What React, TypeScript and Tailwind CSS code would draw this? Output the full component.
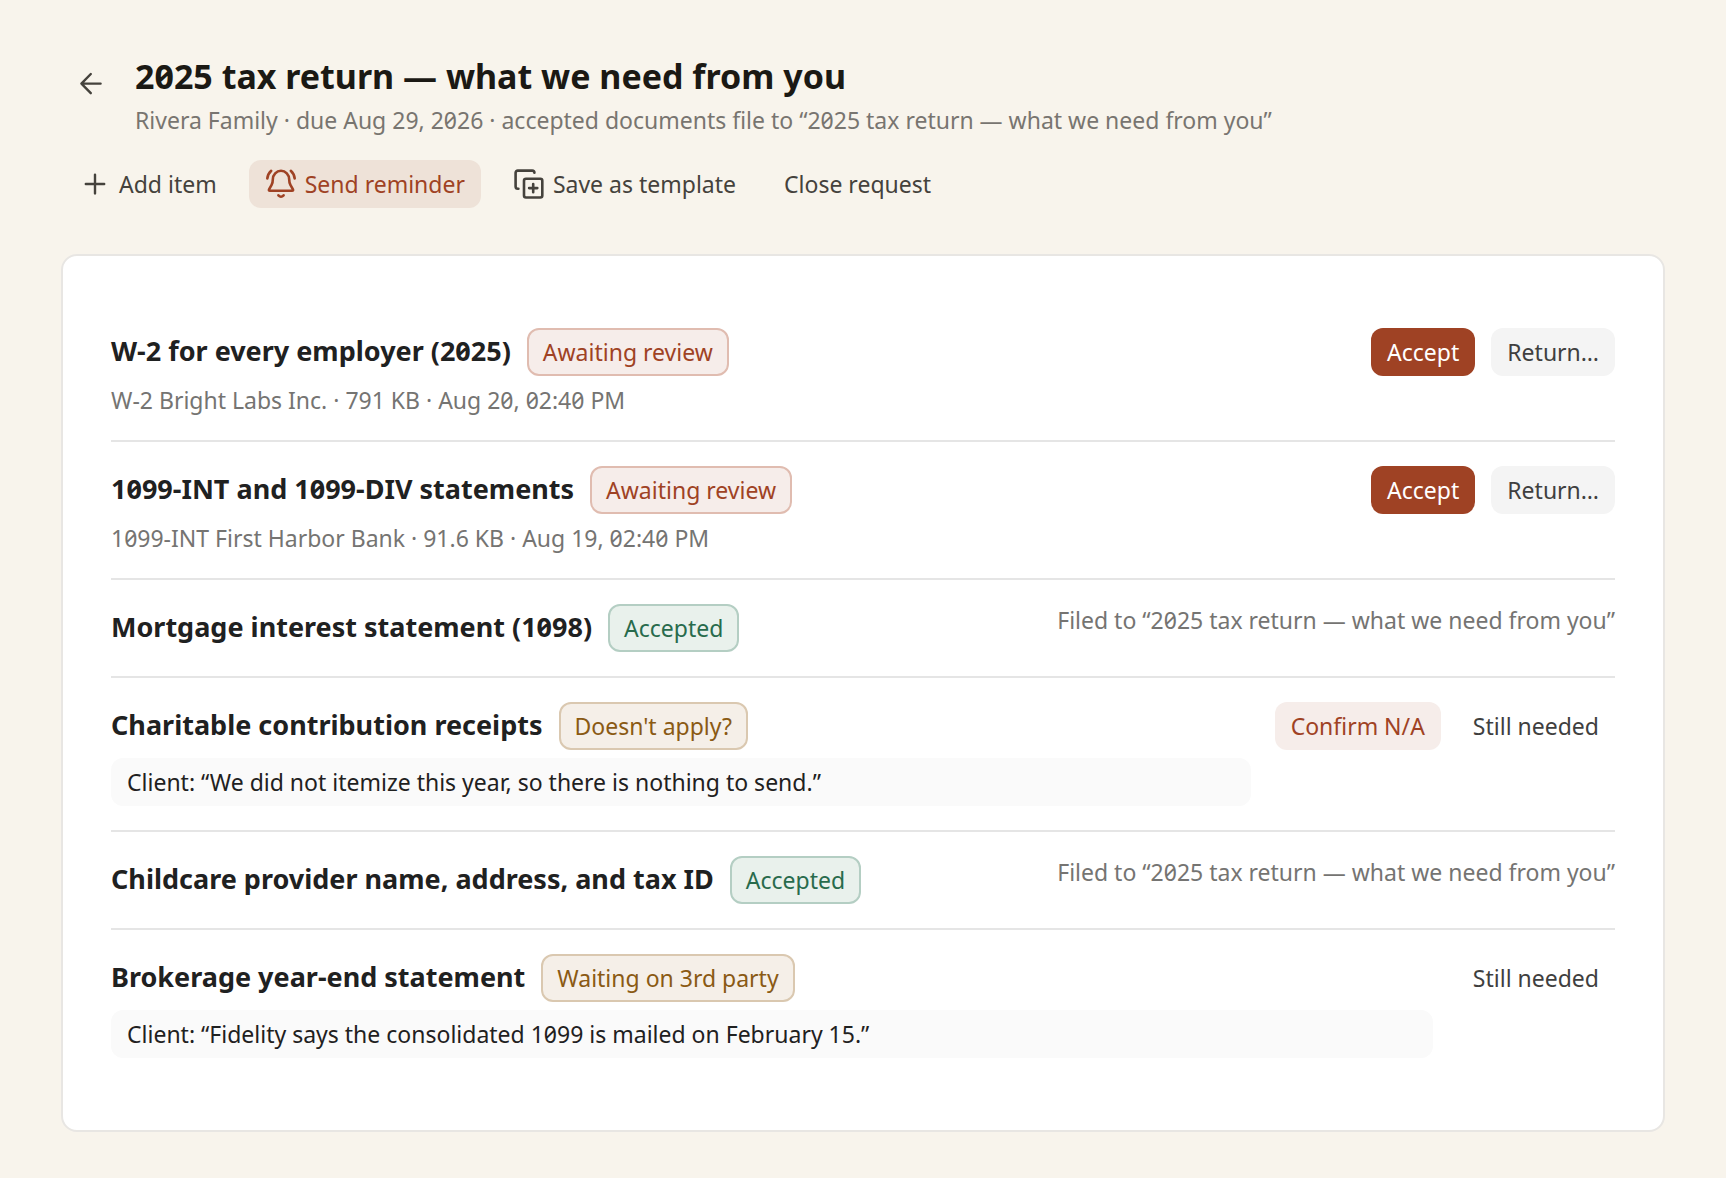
import React from 'react';

type Tone = 'rust' | 'green' | 'amber';

interface RequestItem {
  title: string;
  status: string;
  tone: Tone;
  detail?: string;
  note?: string;
  filed?: string;
  actions?: { label: string; kind: keyof typeof buttonKinds }[];
}

const buttonKinds = {
  primary: 'bg-[#9f4224] text-white',
  neutral: 'bg-[#f4f4f4] text-[#3f3f3f]',
  soft: 'bg-[#f6edea] text-[#9f4224]',
  plain: 'text-[#3f3f3f]'
};

const badgeTones: Record<Tone, string> = {
  rust: 'border-[#e0bcb0] bg-[#f6edea] text-[#9f4224]',
  green: 'border-[#b4cec3] bg-[#e9f1ec] text-[#286b4c]',
  amber: 'border-[#dac8b0] bg-[#f5efe8] text-[#8a5a14]'
};

const folder = '“2025 tax return — what we need from you”';

const items: RequestItem[] = [
  {
    title: 'W-2 for every employer (2025)',
    status: 'Awaiting review',
    tone: 'rust',
    detail: 'W-2 Bright Labs Inc. · 791 KB · Aug 20, 02:40 PM',
    actions: [
      { label: 'Accept', kind: 'primary' },
      { label: 'Return…', kind: 'neutral' }
    ]
  },
  {
    title: '1099-INT and 1099-DIV statements',
    status: 'Awaiting review',
    tone: 'rust',
    detail: '1099-INT First Harbor Bank · 91.6 KB · Aug 19, 02:40 PM',
    actions: [
      { label: 'Accept', kind: 'primary' },
      { label: 'Return…', kind: 'neutral' }
    ]
  },
  {
    title: 'Mortgage interest statement (1098)',
    status: 'Accepted',
    tone: 'green',
    filed: `Filed to ${folder}`
  },
  {
    title: 'Charitable contribution receipts',
    status: "Doesn't apply?",
    tone: 'amber',
    note: 'Client: “We did not itemize this year, so there is nothing to send.”',
    actions: [
      { label: 'Confirm N/A', kind: 'soft' },
      { label: 'Still needed', kind: 'plain' }
    ]
  },
  {
    title: 'Childcare provider name, address, and tax ID',
    status: 'Accepted',
    tone: 'green',
    filed: `Filed to ${folder}`
  },
  {
    title: 'Brokerage year-end statement',
    status: 'Waiting on 3rd party',
    tone: 'amber',
    note: 'Client: “Fidelity says the consolidated 1099 is mailed on February 15.”',
    actions: [{ label: 'Still needed', kind: 'plain' }]
  }
];

function Icon({ children }: { children: React.ReactNode }) {
  return (
    <svg
      viewBox="0 0 32 32"
      className="size-8 shrink-0"
      fill="none"
      stroke="currentColor"
      strokeWidth="2.4"
      strokeLinecap="round"
      strokeLinejoin="round"
      aria-hidden="true"
    >
      {children}
    </svg>
  );
}

function BellIcon() {
  return (
    <g strokeWidth="2.6">
      <path d="M5 22.7q-1.7 0-.8-1.6l2.4-4.3q1.2-2.2 1.2-5.3a8.2 8.7 0 0 1 16.4 0q0 3.1 1.2 5.3l2.4 4.3q.9 1.6-.8 1.6Z" />
      <path d="M6.2 2.8q-3.3 3-3.9 7.7M25.8 2.8q3.3 3 3.9 7.7" />
      <path d="M13.4 27.3q2.6 2.8 5.2 0" />
    </g>
  );
}

function CopyPlusIcon() {
  return (
    <g strokeWidth="2.6">
      <path d="M5.4 20.8h-.6a2.2 2.2 0 0 1-2.2-2.2V4.8a2.2 2.2 0 0 1 2.2-2.2h14.4a2.2 2.2 0 0 1 2.2 2.2" />
      <rect x="11" y="10.7" width="18.3" height="18.8" rx="2" />
      <path d="M20.2 16v8.2M16.1 20.1h8.2" />
    </g>
  );
}

function ToolbarButton({ label, active, icon }: { label: string; active?: boolean; icon?: React.ReactNode }) {
  return (
    <button
      type="button"
      className={`flex items-center gap-2 rounded-xl px-4 py-2 ${active ? 'bg-[#eee2d8] text-[#9f4224]' : 'text-[#45423c]'}`}
    >
      {icon && <Icon>{icon}</Icon>}
      {label}
    </button>
  );
}

function ItemRow({ item }: { item: RequestItem }) {
  return (
    <li className="flex items-start gap-6 border-b-2 border-[#e5e5e5] py-6 last:border-b-0">
      <div className="min-w-0 flex-1">
        <div className="flex items-baseline gap-4">
          <h2 className="text-[27px] leading-8 font-bold text-[#1f2121]">{item.title}</h2>
          <span className={`rounded-xl border-2 px-3.5 py-1.5 ${badgeTones[item.tone]}`}>{item.status}</span>
        </div>
        {item.detail && <p className="mt-2 text-[#757472]">{item.detail}</p>}
        {item.note && <p className="mt-2 rounded-xl bg-[#fafafa] px-4 py-2 text-[#1f2121]">{item.note}</p>}
      </div>
      {item.filed && <p className="text-[#757472]">{item.filed}</p>}
      {item.actions && (
        <div className="flex gap-4">
          {item.actions.map((action) => (
            <button key={action.label} type="button" className={`rounded-xl px-4 py-2 ${buttonKinds[action.kind]}`}>
              {action.label}
            </button>
          ))}
        </div>
      )}
    </li>
  );
}

export default function App() {
  return (
    <main className="min-h-screen bg-[#f8f4ec] px-[61px] pt-14 pb-12 font-['Noto_Sans',sans-serif] text-[23px] leading-8 slashed-zero">
      <header className="px-0.5">
        <div className="flex items-start gap-4">
          <button type="button" aria-label="Back" className="flex h-14 w-14 items-center justify-center text-[#45423c]">
            <Icon>
              <path d="M25.6 15.6H6.4M15.8 6 6.4 15.6l9.4 9.6" />
            </Icon>
          </button>
          <div>
            <h1 className="mb-2 text-[34px] leading-10 font-bold text-[#1b1914]">2025 tax return — what we need from you</h1>
            <p className="text-[#787570]">Rivera Family · due Aug 29, 2026 · accepted documents file to {folder}</p>
          </div>
        </div>
        <div className="mt-6 flex gap-4">
          <ToolbarButton label="Add item" icon={<path d="M16 6.6v18.8M6.8 16h18.4" />} />
          <ToolbarButton label="Send reminder" active icon={<BellIcon />} />
          <ToolbarButton label="Save as template" icon={<CopyPlusIcon />} />
          <ToolbarButton label="Close request" />
        </div>
      </header>
      <section className="mt-[46px] rounded-2xl border-2 border-[#e8e6e3] bg-white p-12">
        <ul>
          {items.map((item) => (
            <ItemRow key={item.title} item={item} />
          ))}
        </ul>
      </section>
    </main>
  );
}
